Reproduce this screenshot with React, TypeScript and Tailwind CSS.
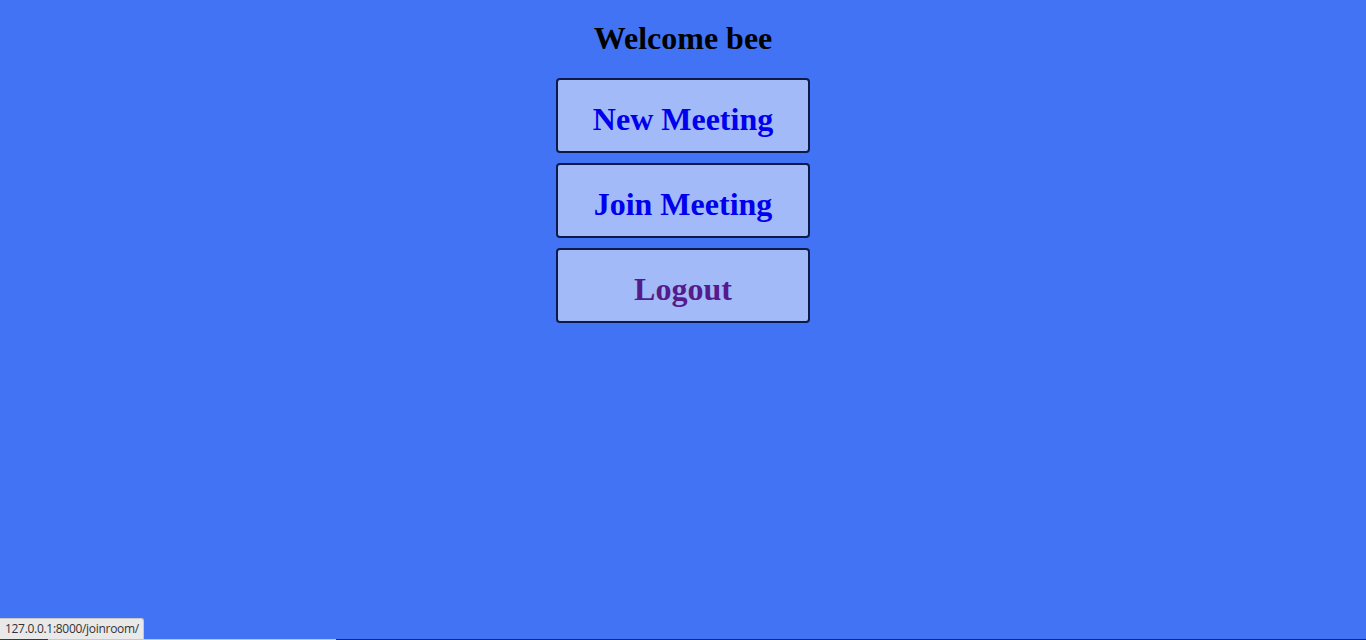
export default function App() {
  const btn =
    "box-border flex h-[75px] w-[254px] justify-center rounded-[4px] border-2 border-[#0b1a47] bg-[#a3baf9] pt-[22px] text-[32px] font-bold leading-[35px] no-underline";
  return (
    <div
      className="relative flex h-[640px] w-full flex-col items-center overflow-hidden bg-[#4173f4]"
      style={{ fontFamily: '"Liberation Serif", "Times New Roman", serif' }}
    >
      <h1 className="mt-[21px] text-[32px] font-bold leading-[35px] text-black">Welcome bee</h1>
      <div className="mt-[22px] flex flex-col gap-[10px]">
        <a href="#new" className={`${btn} text-[#0000ee]`}>New Meeting</a>
        <a href="#join" className={`${btn} text-[#0000ee]`}>Join Meeting</a>
        <a href="#logout" className={`${btn} text-[#551a8b]`}>Logout</a>
      </div>
      <div
        className="absolute bottom-[1px] left-0 h-[21px] w-[144px] whitespace-nowrap rounded-tr-[3px] border border-l-0 border-b-0 border-[#c8c8c8] bg-[#e9e9e9] pl-[5px] text-[12px] leading-[20px] tracking-[-0.3px] text-[#333]"
        style={{ fontFamily: '"Open Sans", "Noto Sans", sans-serif' }}
      >
        127.0.0.1:8000/joinroom/
      </div>
      <div className="absolute bottom-0 left-0 flex h-[1px] w-full">
        <div className="w-[48px] bg-[#3a3a3a]" />
        <div className="w-[288px] bg-[#c9c9c9]" />
        <div className="flex-1 bg-[#1c2b4d]" />
      </div>
    </div>
  );
}
